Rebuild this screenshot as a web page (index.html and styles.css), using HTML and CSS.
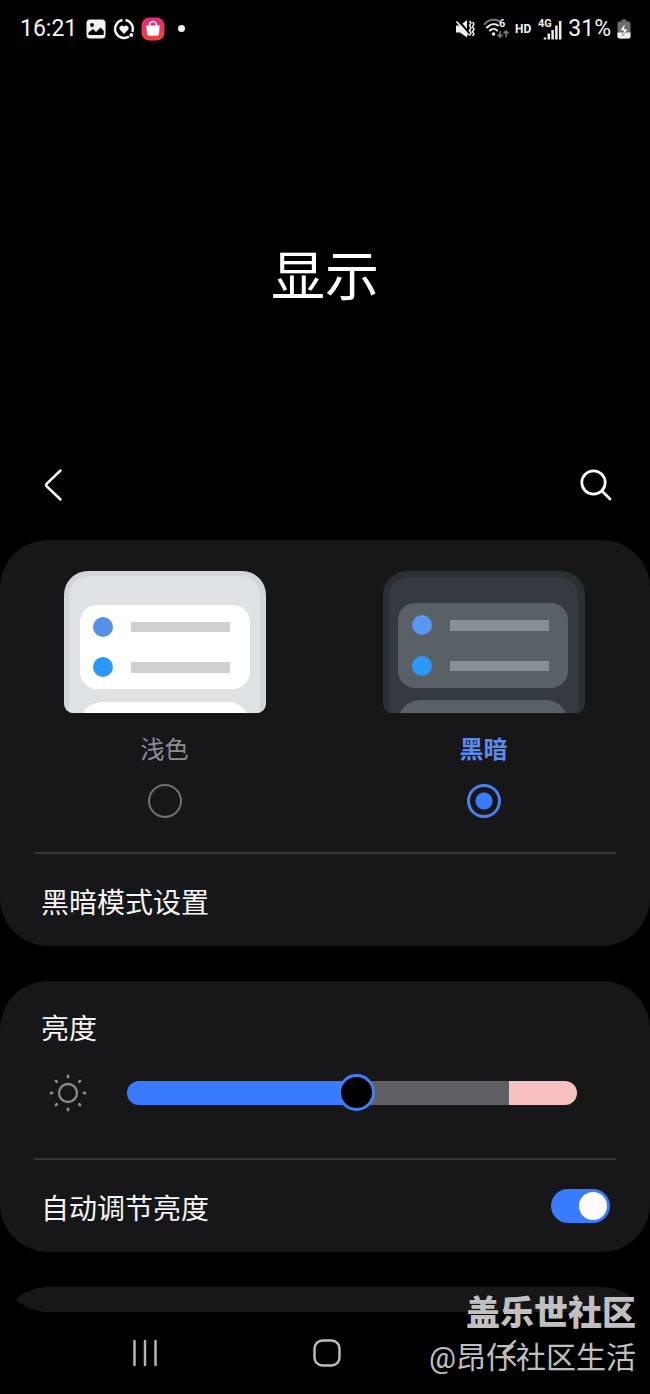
FILE: index.html
```html
<!DOCTYPE html>
<html lang="zh-CN">
<head>
<meta charset="utf-8">
<meta name="viewport" content="width=device-width, initial-scale=1">
<title>显示</title>
<link rel="stylesheet" href="styles.css">
</head>
<body>
<div class="screen">
  <div class="status">
    <div class="status-group">
      <span class="status-text">16:21</span>
      <svg class="status-photo" width="20" height="20" viewBox="0 0 20 20"><rect x="0.5" y="0.5" width="19" height="19" rx="3.5" fill="#f2f2f2"/><circle cx="6" cy="6" r="1.9" fill="#000"/><path d="M2.5 16v-2.5L7 10l3 3 4.5-4.500 3.200 3.200V16z" fill="#000"/></svg>
      <svg class="status-health" width="22" height="22" viewBox="0 0 22 22"><g fill="none" stroke="#f2f2f2" stroke-width="2.500"><path d="M9.500 2.100A9 9 0 1 0 16 18.500"/><path d="M12.500 2.100A9 9 0 0 1 19.300 14"/></g><path d="M11 16 6.900 11.700a2.500 2.500 0 0 1 4.100-3 2.500 2.500 0 0 1 4.100 3z" fill="#f2f2f2"/><circle cx="18.300" cy="17" r="1.900" fill="#f2f2f2"/></svg>
      <svg class="status-shop" width="24" height="24" viewBox="0 0 24 24"><defs><linearGradient id="shop" x1="0" y1="0" x2="0" y2="1"><stop offset="0" stop-color="#e8287c"/><stop offset="1" stop-color="#ef4436"/></linearGradient></defs><rect x="0.500" y="0.500" width="23" height="23" rx="8" fill="url(#shop)"/><path d="M8.500 10V8a3.500 3.500 0 0 1 7 0v2" fill="none" stroke="#fff" stroke-width="1.600"/><path d="M5.300 8.500h13.400l-.7 8.300a2.200 2.200 0 0 1-2.200 2H8.200a2.200 2.200 0 0 1-2.200-2z" fill="#fff"/></svg>
      <span class="status-dot"></span>
    </div>
    <div class="status-group">
      <svg class="status-mute" width="20" height="20" viewBox="0 0 20 20"><path d="M1 6.500h4L12 1v17.500l-7-5H1z" fill="#eee"/><path d="M2 0l13 15" stroke="#000" stroke-width="2"/><path d="M1.500 2.500l12 13.500" stroke="#eee" stroke-width="1.800"/><path d="M14.500 2l1.500 2-1.500 2.500L16 9l-1.500 2.500L16 14l-1.500 2.500M17.500 3l1.500 2-1.500 2.500L19 10l-1.500 2.500L19 15l-1.500 2" fill="none" stroke="#eee" stroke-width="1.500"/></svg>
      <svg class="status-wifi" width="27" height="21" viewBox="0 0 27 21"><g fill="none" stroke-width="2" stroke-linecap="round"><path d="M1.500 6C6 1 12 .8 16 3" stroke="#777"/><path d="M4 9.500C7.500 5.500 12 5.500 15 7.500" stroke="#eee"/><path d="M7 12.500c2-2 5-2 7 0" stroke="#eee"/></g><circle cx="10.500" cy="16" r="1.800" fill="#eee"/><text x="16" y="9" class="icon-label">6</text><g fill="none" stroke="#777" stroke-width="1.700"><path d="M17 13v6M14.500 16.500 17 19l2.500-2.500M23 19v-6M20.500 15.500 23 13l2.500 2.500"/></g></svg>
      <span class="status-hd">HD</span>
      <svg class="status-signal" width="25" height="22" viewBox="0 0 25 22"><text x="0" y="9" class="icon-label">4G</text><path d="M7 19.500v2M10.800 15.500v6M14.600 12v9.500M18.400 7.500v14M22.200 3v18.500" stroke="#eee" stroke-width="2.500"/></svg>
      <span class="status-text">31%</span>
      <svg class="status-battery" width="14" height="20" viewBox="0 0 14 20"><path d="M4.500.5h5v2h2a2 2 0 0 1 2 2v13a2 2 0 0 1-2 2h-9a2 2 0 0 1-2-2v-13a2 2 0 0 1 2-2h2z" fill="#6c6c6c"/><path d="M.5 13.500h13v4a2 2 0 0 1-2 2h-9a2 2 0 0 1-2-2z" fill="#eee"/><path d="M8 4.500 3 11.500h3.500L5.500 17l5.500-7H7.500z" fill="#fff" stroke="#666" stroke-width=".6"/></svg>
    </div>
  </div>

  <header class="hero"><h1>显示</h1></header>

  <div class="toolbar">
    <button type="button" class="icon-button" aria-label="返回"><svg width="20" height="34" viewBox="0 0 20 34"><path d="M17.500 2.500 3.800 15.600a2 2 0 0 0 0 2.800L17.500 31.500" fill="none" stroke="#fff" stroke-width="2.500" stroke-linecap="round"/></svg></button>
    <button type="button" class="icon-button" aria-label="搜索"><svg width="32" height="32" viewBox="0 0 32 32"><circle cx="13.500" cy="13.500" r="11.700" fill="none" stroke="#fff" stroke-width="2.700"/><path d="M22 22l8 8" stroke="#fff" stroke-width="2.700" stroke-linecap="round"/></svg></button>
  </div>

  <main class="content">
    <section class="card">
      <div class="themes">
        <label class="theme">
          <svg width="202" height="142" viewBox="0 0 202 142"><defs><clipPath id="frame"><path d="M0 24A24 24 0 0 1 24 0h154a24 24 0 0 1 24 24v109a9 9 0 0 1-9 9H9a9 9 0 0 1-9-9z"/></clipPath></defs><g clip-path="url(#frame)"><path fill="#d3d6d9" d="M0 0h202v142H0z"/><rect x="5" y="5" width="191" height="160" rx="20" fill="#dee2e5"/><rect x="16" y="34" width="170" height="84" rx="17" fill="#fff"/><rect x="16" y="131" width="170" height="60" rx="22" fill="#fff"/></g><circle cx="39" cy="56" r="10" fill="#5690e8"/><circle cx="39" cy="96" r="10" fill="#2b99fb"/><path fill="#d0d0d0" d="M67 51h99v10H67zM67 91h99v11H67z"/></svg>
          <span class="theme-name">浅色</span>
          <input type="radio" name="theme" class="radio">
        </label>
        <label class="theme">
          <svg width="202" height="142" viewBox="0 0 202 142"><g clip-path="url(#frame)"><path fill="#2b3033" d="M0 0h202v142H0z"/><rect x="6" y="6" width="189" height="160" rx="19" fill="#353a42"/><rect x="15" y="32" width="170" height="85" rx="17" fill="#596167"/><rect x="15" y="129" width="170" height="60" rx="22" fill="#596167"/></g><circle cx="39" cy="54" r="10" fill="#5a96f2"/><circle cx="39" cy="95" r="10" fill="#2b99fb"/><path fill="#898f97" d="M67 49h99v11H67zM67 90h99v10H67z"/></svg>
          <span class="theme-name theme-name-active">黑暗</span>
          <input type="radio" name="theme" class="radio" checked>
        </label>
      </div>
      <hr class="divider">
      <a class="row" href="#dark"><span class="row-text">黑暗模式设置</span></a>
    </section>

    <section class="card">
      <label class="slider-title" for="brightness">亮度</label>
      <div class="slider-row">
        <svg width="38" height="38" viewBox="0 0 38 38" fill="none" stroke="#8a8a8c" stroke-linecap="round"><circle cx="19" cy="19" r="9" stroke-width="2.300"/><path stroke-width="2.800" d="M19 2v1M19 35v1M2 19h1M35 19h1M7 7l.7.7M30.300 30.300l.7.700M31 7l-.7.700M7.700 30.300 7 31"/></svg>
        <input id="brightness" class="slider" type="range" min="0" max="100" value="51">
      </div>
      <hr class="divider">
      <label class="row"><span class="row-text">自动调节亮度</span><input type="checkbox" class="switch" role="switch" checked></label>
    </section>

    <div class="peek"><section class="card card-next"></section></div>
  </main>

  <nav class="nav">
    <button type="button" class="icon-button" aria-label="最近"><svg width="26" height="28" viewBox="0 0 26 28"><path d="M2.500 2v24M13 2v24M23.500 2v24" stroke="#b4b4b4" stroke-width="2.500" stroke-linecap="round"/></svg></button>
    <button type="button" class="icon-button" aria-label="主页"><svg width="28" height="28" viewBox="0 0 28 28"><rect x="1.500" y="1.500" width="25" height="25" rx="8" fill="none" stroke="#bdbdbd" stroke-width="2.400"/></svg></button>
    <button type="button" class="icon-button" aria-label="后退"><svg width="16" height="28" viewBox="0 0 16 28"><path d="M14 2 3 13a1.500 1.500 0 0 0 0 2l11 11" fill="none" stroke="#bdbdbd" stroke-width="2.400" stroke-linecap="round"/></svg></button>
  </nav>

  <div class="watermark"><strong>盖乐世社区</strong><span>@昂仔社区生活</span></div>
</div>
</body>
</html>
```
FILE: styles.css
```css
* { box-sizing: border-box; }

body {
  margin: 0;
  background: #000;
  color: #f5f5f5;
  font-family: Roboto, "Noto Sans CJK SC", sans-serif;
}

svg { display: block; flex: none; }

.screen {
  position: relative;
  display: flex;
  flex-direction: column;
  min-height: 100vh;
  overflow: hidden;
}

.status {
  display: flex;
  justify-content: space-between;
  align-items: center;
  height: 57px;
  padding: 0 19px 0 20px;
}

.status-group { display: flex; align-items: center; }
.status-text { font-size: 23px; line-height: 28px; }
.status-photo { margin-left: 9px; }
.status-health { margin-left: 7px; }
.status-shop { margin-left: 6px; }
.status-dot { width: 7px; height: 7px; margin-left: 13px; border-radius: 50%; background: #f2f2f2; }
.status-wifi { margin-left: 8px; }
.status-hd { margin-left: 5px; font-size: 12px; font-weight: 700; }
.status-signal { margin: 0 5px 0 7px; }
.status-battery { margin-left: 6px; }
.icon-label { font-size: 11px; font-weight: 700; fill: #eee; }

.hero {
  display: flex;
  justify-content: center;
  align-items: center;
  height: 395px;
  padding-top: 46px;
}

h1 { margin: 0; font-size: 54px; line-height: 80px; font-weight: 400; color: #fff; }

.toolbar {
  display: flex;
  justify-content: space-between;
  align-items: center;
  height: 66px;
  margin-bottom: 22px;
  padding: 0 38px 0 43px;
}

.icon-button {
  display: flex;
  justify-content: center;
  align-items: center;
  padding: 0;
  border: 0;
  background: none;
}

.content {
  display: flex;
  flex-direction: column;
  gap: 35px;
  overflow: hidden;
  border-radius: 0 0 48px 48px;
}

.card { border-radius: 48px; background: #17171a; }

.themes {
  display: grid;
  grid-template-columns: 1fr 1fr;
  padding: 31px 7px 34px 5px;
}

.theme { display: flex; flex-direction: column; align-items: center; }
.theme-name { margin: 19px 0 16px; font-size: 24px; line-height: 36px; color: #8f8f92; }
.theme-name-active { font-weight: 700; color: #5c8af0; }

.radio {
  appearance: none;
  width: 34px;
  height: 34px;
  margin: 0;
  border: 2px solid #707074;
  border-radius: 50%;
}

.radio:checked {
  border: 3px solid #4a80ee;
  background: radial-gradient(circle, #3b7bff 8px, transparent 9px);
}

.divider { height: 2px; margin: 0 34px; border: 0; background: #36363a; }

.row {
  display: flex;
  justify-content: space-between;
  align-items: center;
  height: 92px;
  padding: 0 40px 0 41px;
  font-size: 28px;
  line-height: 42px;
  color: inherit;
  text-decoration: none;
}

.row-text { padding-top: 8px; }

.slider-title { display: block; padding: 28px 41px 0; font-size: 28px; line-height: 42px; }

.slider-row {
  display: flex;
  align-items: center;
  gap: 40px;
  padding: 23px 73px 46px 49px;
}

.slider {
  appearance: none;
  flex: 1;
  min-width: 0;
  height: 38px;
  margin: 0;
  background: none;
}

.slider::-webkit-slider-runnable-track {
  height: 24px;
  border-radius: 12px;
  background: linear-gradient(90deg, #387bff 51%, #606064 51% 85%, #f6c1c0 85%);
}

.slider::-webkit-slider-thumb {
  appearance: none;
  width: 37px;
  height: 37px;
  margin-top: -7px;
  border: 3px solid #417ff5;
  border-radius: 50%;
  background: #000;
}

.switch {
  appearance: none;
  display: flex;
  justify-content: flex-end;
  align-items: center;
  width: 59px;
  height: 34px;
  margin: 0;
  padding: 3px;
  border-radius: 17px;
  background: #387bff;
}

.switch::before { content: ""; width: 28px; height: 28px; border-radius: 50%; background: #fcfcff; }

.peek { height: 25px; overflow: hidden; }
.card-next { height: 120px; }

.nav {
  display: grid;
  grid-template-columns: repeat(3, 1fr);
  height: 82px;
  padding: 0 50px 0 54px;
}

.watermark {
  position: absolute;
  right: 14px;
  bottom: 14px;
  display: flex;
  flex-direction: column;
  align-items: flex-end;
  color: #c0c0c0;
}

.watermark strong { font-size: 34px; line-height: 46px; font-weight: 900; }
.watermark span { font-size: 30px; line-height: 44px; font-weight: 400; }
```
